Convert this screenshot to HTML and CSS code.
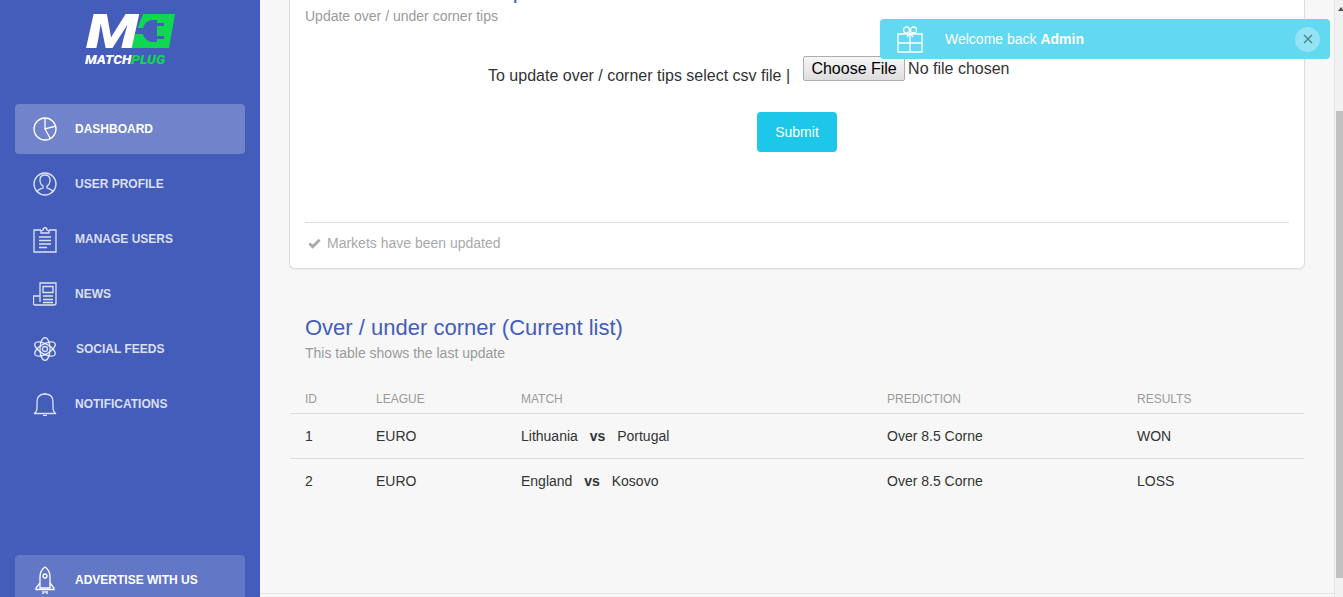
FILE: index.html
```html
<!DOCTYPE html>
<html lang="en">
<head>
<meta charset="utf-8">
<title>Over / under corner tips</title>
<link rel="stylesheet" href="styles.css">
</head>
<body>
<div class="app">
  <aside class="sidebar">
    <div class="logo">
      <svg class="logo-svg" viewBox="0 0 92 56" width="92" height="56">
        <path class="logo-green" d="M58 0H90L84 34H45Z"/>
        <path class="logo-plug" d="M50 14h8c1-4 5-8 9-8h5v3h7v3h-7v10h7v3h-7v3h-5c-4 0-8-4-9-8h-8Z"/>
        <text class="logo-m" x="1" y="34" textLength="52" lengthAdjust="spacingAndGlyphs">M</text>
        <text class="logo-word" x="0" y="49.500" textLength="80" lengthAdjust="spacingAndGlyphs"><tspan class="w">MATCH</tspan><tspan class="g">PLUG</tspan></text>
      </svg>
    </div>
    <nav class="nav">
      <a class="nav-item active">
        <svg class="ico" viewBox="0 0 24 24"><circle cx="12" cy="12" r="11"/><path d="M12 1v11l11-3M12 12l5 9"/></svg>
        <span>Dashboard</span>
      </a>
      <a class="nav-item">
        <svg class="ico" viewBox="0 0 24 24"><circle cx="12" cy="12" r="11"/><path d="M4 20c1-3 4-3 6-4v-2c-2-1-3-3-3-6 0-3 2-5 5-5s5 2 5 5c0 3-1 5-3 6v2c2 1 5 1 6 4"/></svg>
        <span>User Profile</span>
      </a>
      <a class="nav-item">
        <svg class="ico ico-tall" viewBox="0 0 24 27"><path d="M8 4H1v22h22V4h-7"/><path d="M8 7V5l2-1c0-3 4-3 4 0l2 1v2Z"/><path d="M6 11h12M6 14.500h12M6 18h12M6 21.500h8"/></svg>
        <span>Manage Users</span>
      </a>
      <a class="nav-item">
        <svg class="ico" viewBox="0 0 24 24"><path d="M7 20V1h16v20c0 1.500-1 2-2 2H2c-1 0-1.500-.5-1.500-2v-7H7"/><path d="M10 4.500h10v6H10ZM10 14h10M10 17.500h10M10 20.500h10"/></svg>
        <span>News</span>
      </a>
      <a class="nav-item social">
        <svg class="ico" viewBox="0 0 24 24"><circle cx="12" cy="12" r="2.500"/><ellipse cx="12" cy="12" rx="5" ry="11.500"/><ellipse cx="12" cy="12" rx="5" ry="11.500" transform="rotate(60 12 12)"/><ellipse cx="12" cy="12" rx="5" ry="11.500" transform="rotate(120 12 12)"/></svg>
        <span>Social Feeds</span>
      </a>
      <a class="nav-item">
        <svg class="ico" viewBox="0 0 24 24"><path d="M1 21.500c2-1 3-3 3-6V10c0-5 3-8 8-8s8 3 8 8v5.500c0 3 1 5 3 6Z"/><path d="M10 23.500h4M11.500 1.500h1"/></svg>
        <span>Notifications</span>
      </a>
    </nav>
    <a class="nav-item promo">
      <svg class="ico ico-rocket" viewBox="0 0 24 28"><path d="M12 1c3 2 5 6 5 10v11H7V11c0-4 2-8 5-10Z"/><circle cx="12" cy="10" r="2"/><path d="M7 17l-4 5v1.500h18V22l-4-5M10 25v3M12 25v2M14 25v3"/></svg>
      <span>Advertise with us</span>
    </a>
  </aside>

  <main class="main">
    <section class="card">
      <h4 class="card-title">Over / under corner tips</h4>
      <p class="card-sub">Update over / under corner tips</p>
      <form class="upload">
        <div class="file-row">
          <label class="file-label" for="csv">To update over / corner tips select csv file |</label>
          <input class="file-input" id="csv" type="file">
        </div>
        <button class="submit" type="button">Submit</button>
      </form>
      <div class="card-foot">
        <svg class="check" viewBox="0 0 14 11"><path d="M1.500 5.500L5 9l7.500-7.500"/></svg>
        <span>Markets have been updated</span>
      </div>
    </section>

    <section class="list">
      <h4 class="list-title">Over / under corner (Current list)</h4>
      <p class="list-sub">This table shows the last update</p>
      <table class="table">
        <colgroup>
          <col class="c-id"><col class="c-league"><col class="c-match"><col class="c-pred"><col class="c-res">
        </colgroup>
        <thead>
          <tr><th>ID</th><th>League</th><th>Match</th><th>Prediction</th><th>Results</th></tr>
        </thead>
        <tbody>
          <tr>
            <td>1</td><td>EURO</td>
            <td>Lithuania <b class="vs">vs</b> Portugal</td>
            <td>Over 8.5 Corne</td><td>WON</td>
          </tr>
          <tr>
            <td>2</td><td>EURO</td>
            <td>England <b class="vs">vs</b> Kosovo</td>
            <td>Over 8.5 Corne</td><td>LOSS</td>
          </tr>
        </tbody>
      </table>
    </section>
  </main>

  <div class="scrollbar"><span class="arrow"></span><span class="thumb"></span></div>
</div>

<div class="toast">
  <svg class="toast-ico" viewBox="0 0 26 27"><path d="M1 8h24v18H1ZM1 17h24M13 8v18"/><circle cx="9.500" cy="4" r="3"/><circle cx="16.500" cy="4" r="3"/><path d="M13 7l-3 4M13 7l3 4"/></svg>
  <span class="toast-text">Welcome back <b>Admin</b></span>
  <span class="toast-close"><svg viewBox="0 0 10 10"><path d="M1 1l8 8M9 1l-8 8"/></svg></span>
</div>
</body>
</html>
```
FILE: styles.css
```css
* { box-sizing: border-box; }
html, body { margin: 0; height: 100%; overflow: hidden; }
body { font-family: "Liberation Sans", Arial, sans-serif; font-size: 14px; color: #333; background: #f7f7f7; }

.app { display: flex; height: 597px; overflow: hidden; }

/* Sidebar */
.sidebar { width: 260px; flex: none; background: #445dbb; padding: 0 15px; display: flex; flex-direction: column; overflow: hidden; }
.logo { height: 104px; flex: none; padding: 14px 0 0 70px; }
.logo-svg { display: block; }
.logo-m { font-family: Roboto, "Liberation Sans", sans-serif; font-weight: 900; font-style: italic; font-size: 48px; fill: #fff; }
.logo-green { fill: #0fd850; }
.logo-plug { fill: #445dbb; }
.logo-word { font-family: Roboto, "Liberation Sans", sans-serif; font-weight: 900; font-style: italic; font-size: 12px; }
.logo-word .w { fill: #fff; }
.logo-word .g { fill: #0fd850; }

.nav { display: flex; flex-direction: column; gap: 5px; }
.nav-item { height: 50px; flex: none; display: flex; align-items: center; padding-left: 18px; gap: 18px; border-radius: 4px; font-size: 12px; font-weight: 700; text-transform: uppercase; color: rgba(255,255,255,.82); }
.nav-item.active { background: rgba(255,255,255,.24); color: #fff; }
.nav-item.social { gap: 19px; }
.nav-item.promo { margin-top: 126px; background: rgba(255,255,255,.16); color: #fff; }
.ico { width: 24px; height: 24px; flex: none; fill: none; stroke: currentColor; stroke-width: 1.300; }
.ico-tall { height: 27px; }
.ico-rocket { height: 28px; }

/* Main */
.main { flex: 1; min-width: 0; height: 594px; border-bottom: 1px solid #e5e5e5; padding: 0 29px; }
.card { height: 269px; background: #fff; border: 1px solid #ddd; border-top: 0; border-radius: 0 0 6px 6px; box-shadow: 0 1px 2px rgba(0,0,0,.05); padding: 0 15px; display: flex; flex-direction: column; overflow: hidden; }
.card-title { margin: -23px 0 0; height: 30px; font-size: 22px; font-weight: 400; line-height: 28px; color: #445dbb; }
.card-sub { margin: 1px 0 0; font-size: 14px; line-height: 16px; color: #9a9a9a; }

.upload { display: flex; flex-direction: column; align-items: center; }
.file-row { align-self: flex-start; display: flex; align-items: flex-start; padding: 32px 0 0 183px; }
.file-label { font-size: 16px; line-height: 18px; margin: 11px 13px 0 0; color: #333; white-space: nowrap; }
.file-input { font: 16px "Liberation Sans", Arial, sans-serif; color: #333; width: 300px; height: 25px; }
.file-input::file-selector-button { font: 16px "Liberation Sans", Arial, sans-serif; height: 25px; width: 102px; padding: 0; margin: 0 3px 0 0; color: #000; background: linear-gradient(#f6f6f6, #dedede); border: 1px solid #adadad; border-radius: 2px; }
.submit { margin-top: 27px; width: 80px; height: 40px; border: 0; border-radius: 4px; background: #1dc7ea; color: #fff; font: 14px "Liberation Sans", Arial, sans-serif; }

.card-foot { margin-top: auto; height: 46px; padding: 0 0 5px 3px; border-top: 1px solid #ddd; display: flex; align-items: center; gap: 6px; color: #a9a9a9; font-size: 14px; }
.check { width: 13px; height: 11px; fill: none; stroke: #a9a9a9; stroke-width: 3; }

/* List */
.list { padding-top: 46px; }
.list-title { margin: 0 16px; font-size: 22px; font-weight: 400; line-height: 26px; color: #445dbb; }
.list-sub { margin: 4px 16px 0; font-size: 14px; line-height: 16px; color: #9a9a9a; }
.table { width: 1014px; margin: 21px 0 0 1px; border-collapse: collapse; table-layout: fixed; }
.c-id { width: 71px; }
.c-league { width: 145px; }
.c-match { width: 366px; }
.c-pred { width: 250px; }
.table th { height: 31px; padding: 0 0 7px 15px; vertical-align: bottom; font-size: 12px; line-height: 14px; font-weight: 400; text-align: left; text-transform: uppercase; color: #9a9a9a; border-bottom: 1px solid #ddd; }
.table td { height: 45px; padding: 0 0 0 15px; font-size: 14px; color: #333; }
.table tbody tr:first-child td { border-bottom: 1px solid #ddd; }
.vs { margin: 0 8px; }

/* Scrollbar */
.scrollbar { width: 9px; flex: none; background: #f1f1f1; border-left: 1px solid #e4e4e4; position: relative; }
.arrow { position: absolute; top: 7px; left: 3px; border: 3px solid transparent; border-top: 0; border-bottom: 4px solid #505050; }
.thumb { position: absolute; top: 111px; bottom: 19px; left: 1px; right: 0; background: #c1c1c1; }

/* Toast */
.toast { position: fixed; top: 19px; left: 880px; width: 450px; height: 40px; border-radius: 4px; background: #63d8f1; color: #fff; display: flex; align-items: center; padding: 0 10px 0 17px; }
.toast-ico { width: 26px; height: 27px; fill: none; stroke: #fff; stroke-width: 1.300; flex: none; }
.toast-text { margin-left: 22px; flex: 1; font-size: 14px; }
.toast-close { width: 25px; height: 25px; border-radius: 50%; background: rgba(255,255,255,.3); display: flex; align-items: center; justify-content: center; }
.toast-close svg { width: 10px; height: 10px; fill: none; stroke: #4a7f8c; stroke-width: 1.300; }
```
